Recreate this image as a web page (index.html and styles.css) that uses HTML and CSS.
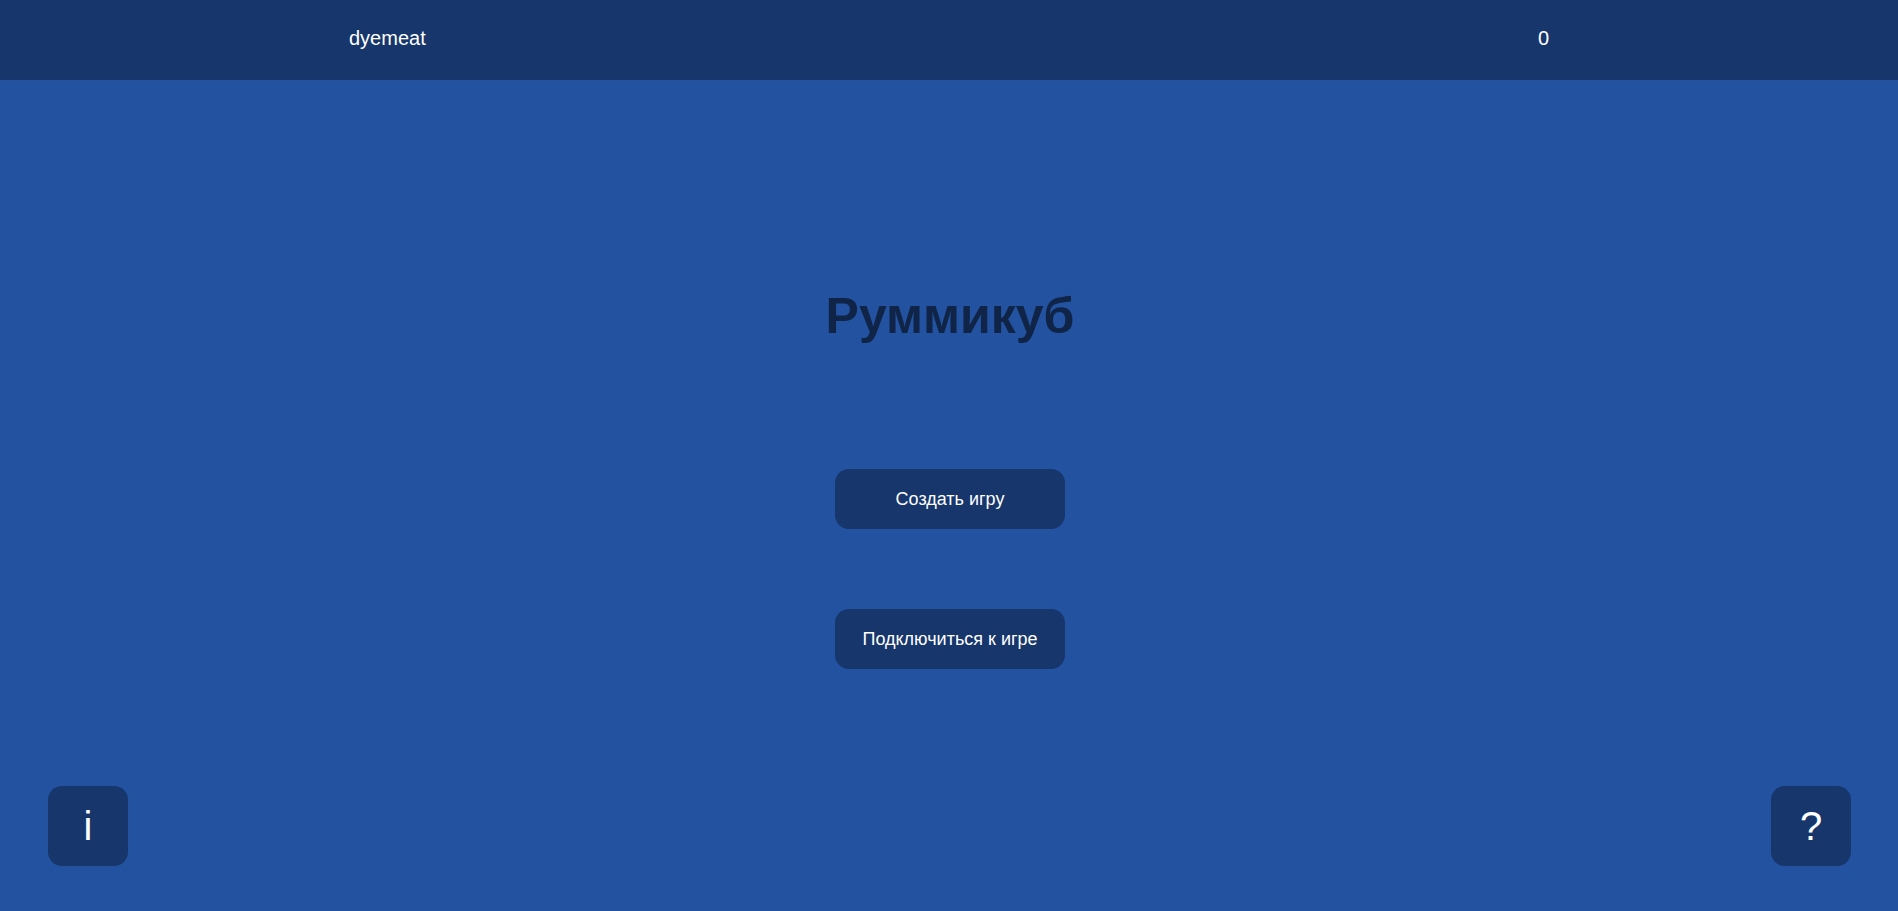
FILE: index.html
```html
<!DOCTYPE html>
<html lang="ru">
<head>
<meta charset="utf-8">
<title>Руммикуб</title>
<link rel="stylesheet" href="styles.css">
</head>
<body>
<header class="topbar">
  <div class="topbar-inner">
    <span class="username">dyemeat</span>
    <span class="score">0</span>
  </div>
</header>
<main class="menu">
  <h1 class="title">Руммикуб</h1>
  <div class="actions">
    <button class="btn">Создать игру</button>
    <button class="btn">Подключиться к игре</button>
  </div>
</main>
<button class="corner-btn corner-left">i</button>
<button class="corner-btn corner-right">?</button>
</body>
</html>
```
FILE: styles.css
```css
html, body {
  margin: 0;
  padding: 0;
  height: 100%;
}
body {
  background: #2353a0;
  font-family: "Liberation Sans", Arial, sans-serif;
  color: #ffffff;
  overflow: hidden;
}
.topbar {
  background: #16366c;
  height: 80px;
  box-sizing: border-box;
  padding-top: 27px;
}
.topbar-inner {
  width: 1200px;
  margin: 0 auto;
  display: flex;
  justify-content: space-between;
  font-size: 20px;
  line-height: 23px;
}
.menu {
  display: flex;
  flex-direction: column;
  align-items: center;
  padding-left: 2px;
}
.title {
  margin: 208px 0 0;
  font-size: 50px;
  line-height: 56px;
  font-weight: bold;
  color: #0f2446;
}
.actions {
  margin-top: 125px;
  display: flex;
  flex-direction: column;
  gap: 80px;
}
.btn {
  width: 230px;
  height: 60px;
  border: none;
  border-radius: 14px;
  background: #16366c;
  color: #ffffff;
  font-family: "Liberation Sans", Arial, sans-serif;
  font-size: 18px;
  cursor: pointer;
}
.corner-btn {
  position: fixed;
  bottom: 45px;
  width: 80px;
  height: 80px;
  border: none;
  border-radius: 14px;
  background: #16366c;
  color: #ffffff;
  font-family: "Liberation Sans", Arial, sans-serif;
  font-size: 40px;
  padding: 0;
  cursor: pointer;
}
.corner-left { left: 48px; }
.corner-right { right: 47px; }
```
